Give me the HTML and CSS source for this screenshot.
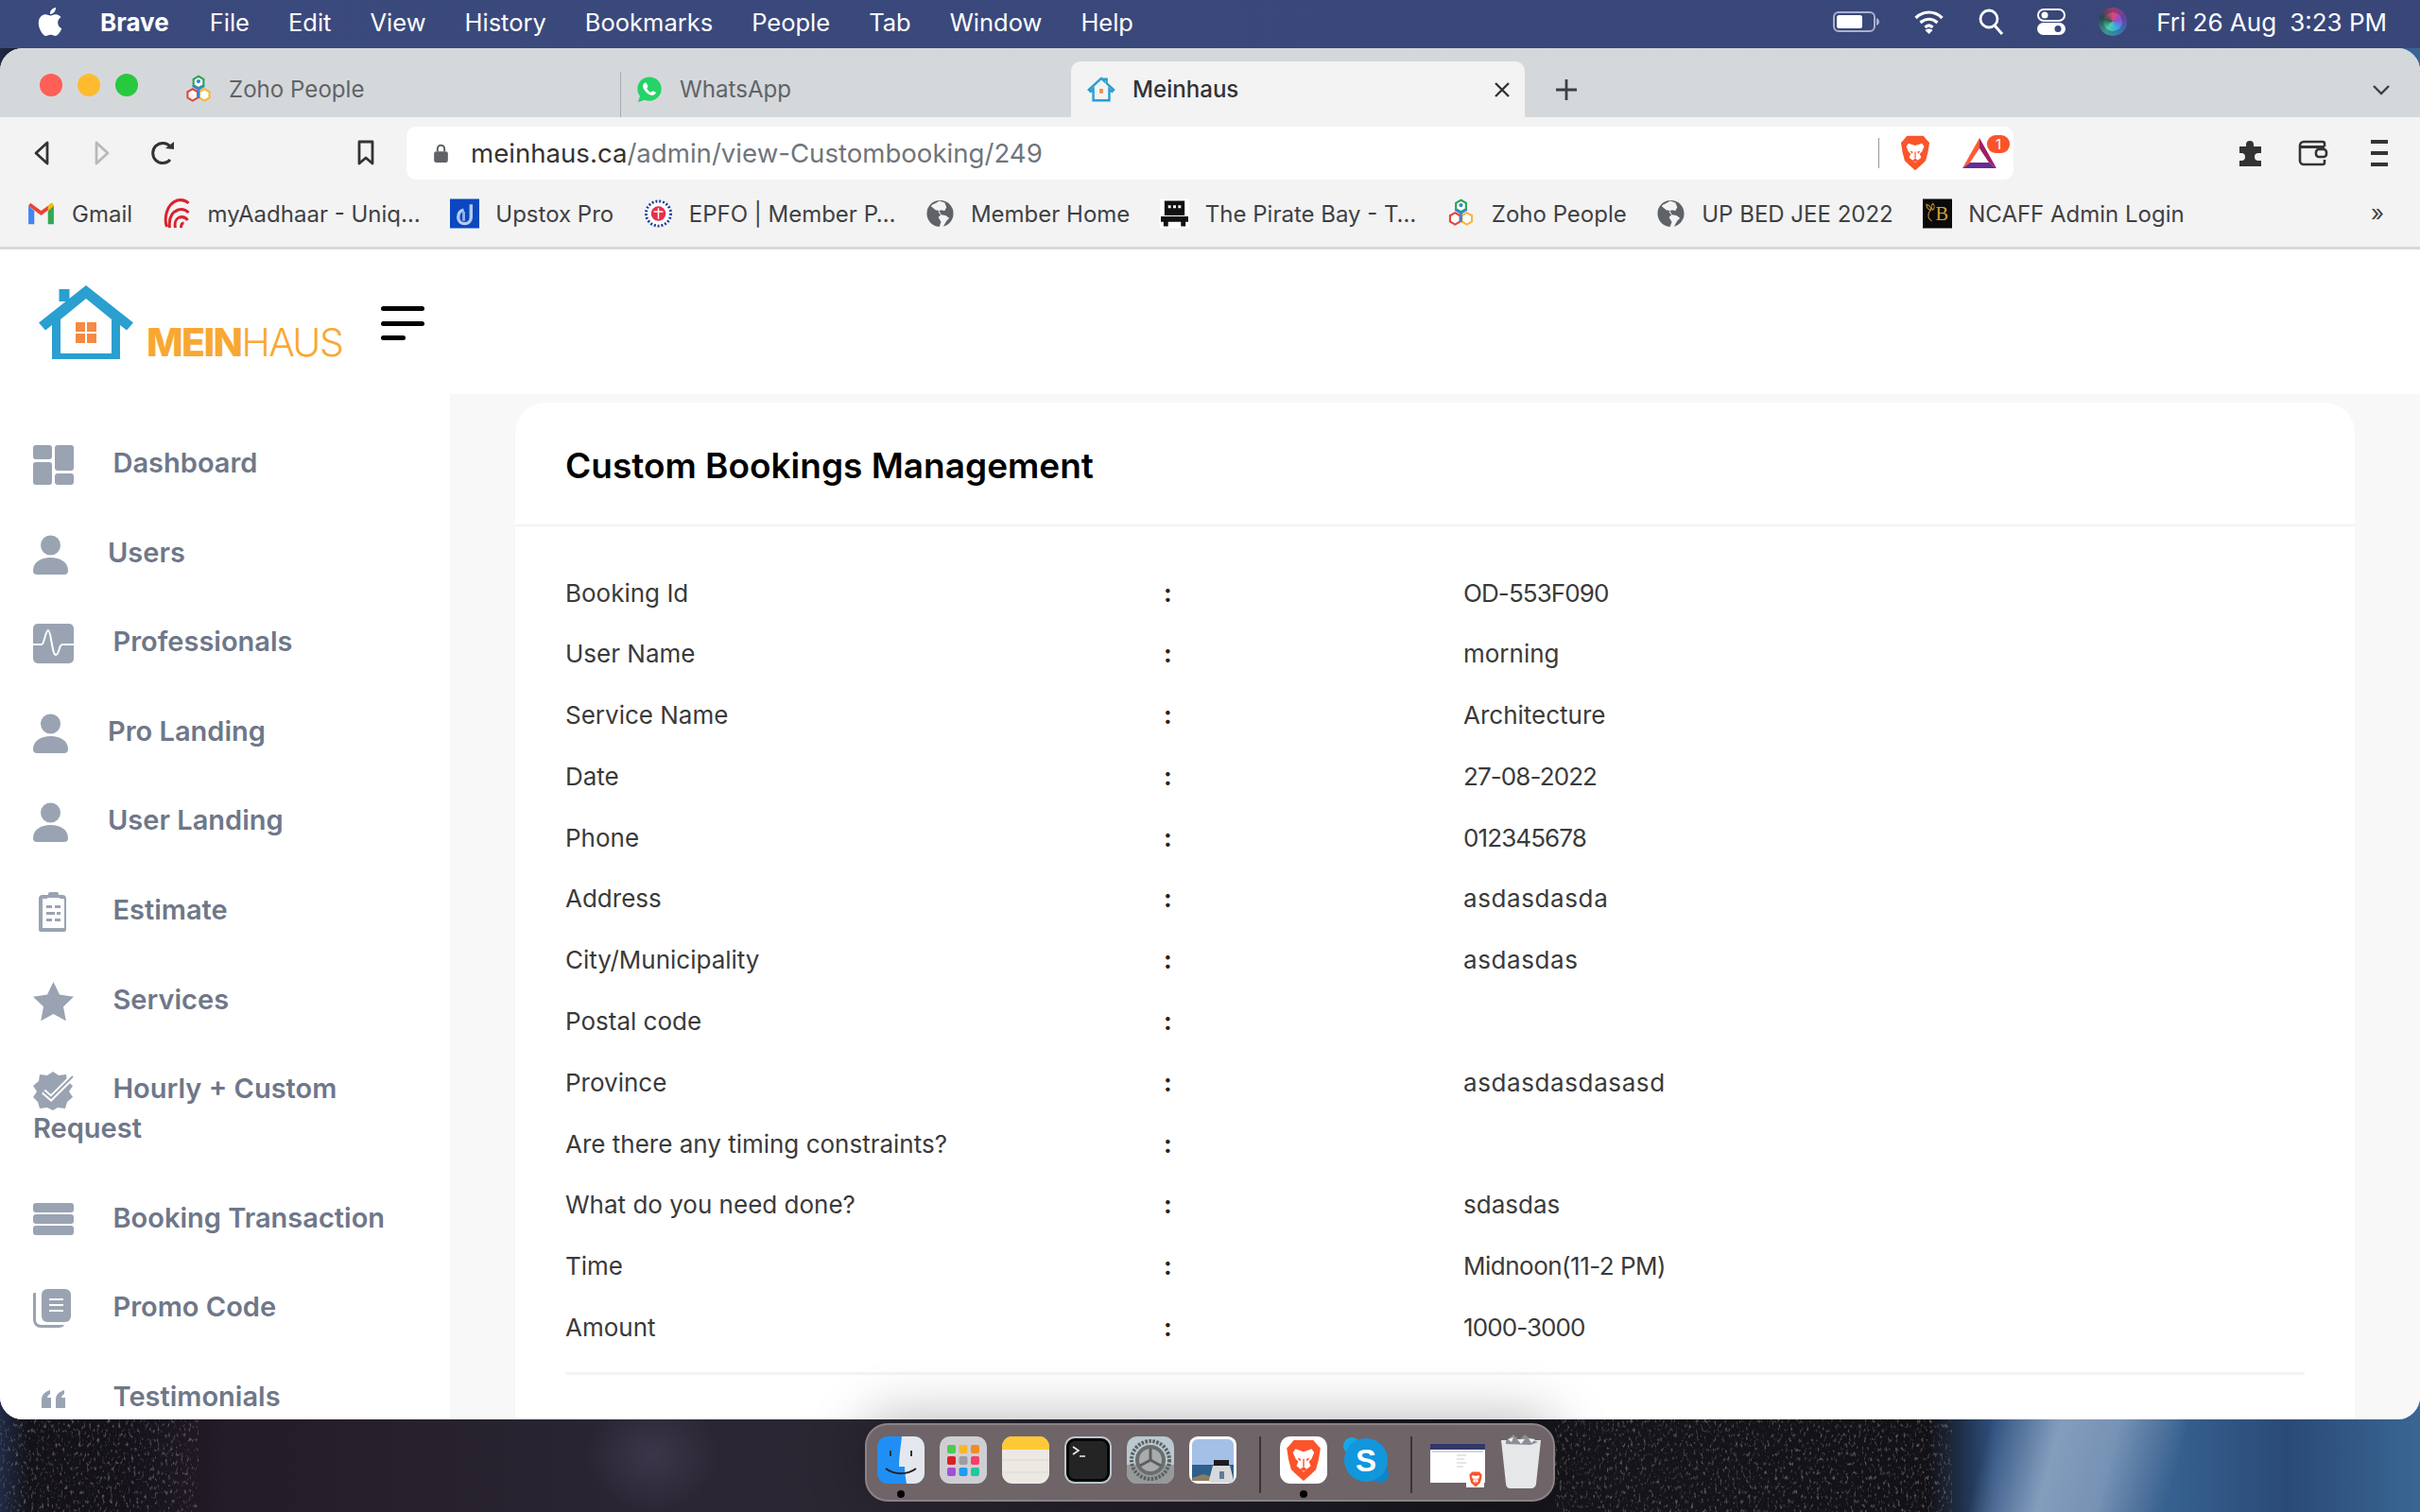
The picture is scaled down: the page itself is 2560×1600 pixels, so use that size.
FILE: index.html
```html
<!DOCTYPE html>
<html lang="en">
<head>
  <meta charset="UTF-8">
  <title>Meinhaus</title>
  <link rel="stylesheet" href="styles.css">
</head>
<body>
  <svg class="defs" xmlns="http://www.w3.org/2000/svg">
    <symbol id="i-zoho" viewBox="0 0 32 36">
      <path d="M16 2l6 3.500v7L16 16l-6-3.500v-7z" fill="#fff" stroke="#2aa35a" stroke-width="2.400"/>
      <path d="M9 17l6 3.500v7L9 31l-6-3.500v-7z" fill="#fff" stroke="#e4443f" stroke-width="2.400"/>
      <path d="M23 17l6 3.500v7L23 31l-6-3.500v-7z" fill="#fff" stroke="#f5b83d" stroke-width="2.400"/>
      <circle cx="16" cy="8" r="2.400" fill="#3d85c6"/>
      <path d="M9 13l7 4 7-4M16 17v11" fill="none" stroke="#3d85c6" stroke-width="3"/>
    </symbol>
    <symbol id="i-globe" viewBox="0 0 32 32">
      <circle cx="16" cy="16" r="14.500" fill="#5f6368"/>
      <path d="M15 2c-3 3-7 3-9 6l5 4 4 1 2 4-3 3 3 5-2 6h4l4-7 3-3-4-3-6-1-2-3 3-2 4 1 2-4-2-5z" fill="#f3f3f3"/>
    </symbol>
    <symbol id="i-user" viewBox="0 0 37 42">
      <ellipse cx="18.500" cy="11" rx="10.500" ry="10.500"/>
      <path d="M0 38c0-9 8-14 18.500-14S37 29 37 38c0 2.500-1.500 4-4 4H4c-2.500 0-4-1.500-4-4z"/>
    </symbol>
    <symbol id="i-lion" viewBox="0 0 40 48">
      <path d="M9 1h22l5 6 3 3-2 13-3 11-6 6-8 7-8-7-6-6-3-11L1 10l3-3z" fill="#fb542b"/>
      <path d="M11 11l9 3 9-3 3 4-3 7-3 3 2 5-5 4-3 3-3-3-5-4 2-5-3-3-3-7z" fill="#fff"/>
      <path d="M13 21l4 1-1 3zM27 21l-4 1 1 3zM16 34l4-3 4 3-4 2z" fill="#fb542b"/>
      <path d="M20 22v9" stroke="#fb542b" stroke-width="1.500"/>
    </symbol>
    <filter id="speckle" x="0" y="0" width="100%" height="100%">
      <feTurbulence type="fractalNoise" baseFrequency="0.36 0.2" numOctaves="3" seed="7"/>
      <feColorMatrix type="matrix" values="0 0 0 0 0.36  0 0 0 0 0.34  0 0 0 0 0.36  0 0 0 4 -2.300"/>
    </filter>
    <clipPath id="rock-shape"><path d="M70 0h130l-70 45-40 53H8l20-45z"/></clipPath>
  </svg>

  <svg class="wall-noise" viewBox="0 0 2560 98">
    <g clip-path="url(#rock-shape)"><rect filter="url(#speckle)" x="0" width="210" height="98"/></g>
    <rect filter="url(#speckle)" x="1645" width="420" height="98"/>
  </svg>

  <header class="menubar">
    <nav class="menu-left">
      <svg class="apple" viewBox="0 0 24 24"><path fill="#fff" d="M12.152 6.896c-.948 0-2.415-1.078-3.960-1.040-2.040.027-3.910 1.183-4.961 3.014-2.117 3.675-.546 9.103 1.519 12.090 1.013 1.454 2.208 3.090 3.792 3.039 1.520-.065 2.090-.987 3.935-.987 1.831 0 2.350.987 3.960.948 1.637-.026 2.676-1.480 3.676-2.948 1.156-1.688 1.636-3.325 1.662-3.415-.039-.013-3.182-1.221-3.220-4.857-.026-3.040 2.480-4.494 2.597-4.559-1.429-2.090-3.623-2.324-4.390-2.376-2-.156-3.675 1.090-4.610 1.090zM15.530 3.830c.843-1.012 1.400-2.427 1.245-3.830-1.207.052-2.662.805-3.532 1.818-.780.896-1.454 2.338-1.273 3.714 1.338.104 2.715-.688 3.559-1.701"/></svg>
      <b>Brave</b>
      <span>File</span>
      <span>Edit</span>
      <span>View</span>
      <span>History</span>
      <span>Bookmarks</span>
      <span>People</span>
      <span>Tab</span>
      <span>Window</span>
      <span>Help</span>
    </nav>
    <div class="menu-right">
      <svg class="st-battery" viewBox="0 0 50 24"><rect x="1" y="2" width="43" height="20" rx="5" fill="none" stroke="#aab2cc" stroke-width="2"/><rect x="4" y="5" width="27" height="14" rx="2.500" fill="#fff"/><path d="M46 8c2 1 3 2 3 4s-1 3-3 4z" fill="#aab2cc"/></svg>
      <svg class="st-wifi" viewBox="0 0 32 26"><path d="M2 9c8-8 20-8 28 0M7 14c5.500-5 12.500-5 18 0M12 19c2.500-2.500 5.500-2.500 8 0" fill="none" stroke="#fff" stroke-width="3.200"/><path d="M16 26l-4-4c2-2 6-2 8 0z" fill="#fff"/></svg>
      <svg class="st-search" viewBox="0 0 28 28"><circle cx="12" cy="11" r="9" fill="none" stroke="#fff" stroke-width="2.800"/><path d="M18 18l8 9" stroke="#fff" stroke-width="3"/></svg>
      <svg class="st-control" viewBox="0 0 30 28"><rect x="1" y="1" width="28" height="12" rx="6" fill="none" stroke="#fff" stroke-width="2"/><circle cx="8" cy="7" r="3.500" fill="#fff"/><rect x="0" y="15" width="30" height="13" rx="6.500" fill="#fff"/><circle cx="22" cy="21.500" r="3.500" fill="#3a4878"/></svg>
      <i class="st-siri"></i>
      <span class="clock"><span>Fri 26 Aug</span><span>3:23 PM</span></span>
    </div>
  </header>

  <div class="window">
    <div class="tabstrip">
      <div class="lights"><i class="red"></i><i class="amber"></i><i class="green"></i></div>
      <div class="tab">
        <svg class="fav" viewBox="0 0 32 36"><use href="#i-zoho"/></svg>
        <span>Zoho People</span>
      </div>
      <div class="tab tab-sep">
        <svg class="fav" viewBox="0 0 32 32"><circle cx="16" cy="15" r="13.500" fill="#25d366"/><path d="M3 30l3-9 6 6z" fill="#25d366"/><path d="M11 8c-2 1-3 3-2 6 2 4 5 7 9 8 3 1 5-1 5.500-3l-4-2-1.500 2c-2-.500-4-2.500-5-5l1.500-1.500-2-4.500z" fill="#fff"/></svg>
        <span>WhatsApp</span>
      </div>
      <div class="tab tab-active">
        <svg class="fav" viewBox="0 0 32 32"><path d="M2 16L16 3l3 2.800V4h3v4.600L30 16l-2 2-3-2.700V28H7V15.300L4 18z" fill="none" stroke="#2a9fd0" stroke-width="2.600"/><path d="M14 15h4v5h-4z" fill="#f58a42"/></svg>
        <span>Meinhaus</span>
        <svg class="tab-close" viewBox="0 0 18 18"><path d="M2 2l14 14M16 2L2 16" stroke="#333" stroke-width="2.400"/></svg>
      </div>
      <svg class="tab-new" viewBox="0 0 24 24"><path d="M12 1v22M1 12h22" stroke="#3c4043" stroke-width="2.800"/></svg>
      <svg class="tab-more" viewBox="0 0 20 12"><path d="M2 2l8 8 8-8" fill="none" stroke="#3c4043" stroke-width="2.400"/></svg>
    </div>

    <div class="toolbar">
      <svg class="tb-back" viewBox="0 0 20 28"><path d="M16 3L4 14l12 11z" fill="none" stroke="#333" stroke-width="2.800" stroke-linejoin="round"/></svg>
      <svg class="tb-fwd" viewBox="0 0 20 28"><path d="M4 3l12 11L4 25z" fill="none" stroke="#b9b9b9" stroke-width="2.800" stroke-linejoin="round"/></svg>
      <svg class="tb-reload" viewBox="0 0 28 28"><path d="M22 21a10.500 10.500 0 1 1 0-14" fill="none" stroke="#333" stroke-width="3"/><path d="M17 9l9 1V2z" fill="#333"/></svg>
      <svg class="tb-mark" viewBox="0 0 20 28"><path d="M3 2h14v23l-7-6-7 6z" fill="none" stroke="#333" stroke-width="2.800" stroke-linejoin="round"/></svg>
      <div class="omnibox">
        <svg class="lock" viewBox="0 0 18 24"><path d="M5 10V7a4 4 0 0 1 8 0v3" fill="none" stroke="#5f6368" stroke-width="2.200"/><rect x="1" y="10" width="16" height="13" rx="2.500" fill="#5f6368"/></svg>
        <span class="url"><span class="url-host">meinhaus.ca</span>/admin/view-Custombooking/249</span>
        <i class="omni-sep"></i>
        <svg class="omni-brave" viewBox="0 0 40 48"><use href="#i-lion"/></svg>
        <div class="omni-bat">
          <svg viewBox="0 0 36 32"><path d="M18 0L0 32l8-6 10-15z" fill="#ff5a36"/><path d="M18 0l18 32-8-6-10-15z" fill="#9e1f63"/><path d="M0 32l8-6h20l8 6z" fill="#662d91"/></svg>
          <em>1</em>
        </div>
      </div>
      <svg class="tb-puzzle" viewBox="0 0 28 30"><path d="M10 6a4 4 0 1 1 8 0v2h8v7h-3a4 4 0 1 0 0 8h3v6H3v-6h2a4 4 0 1 0 0-8H3V8h7z" fill="#333"/></svg>
      <svg class="tb-wallet" viewBox="0 0 32 28"><path d="M28 7V4a2 2 0 0 0-2-2H6a4 4 0 0 0-4 4v16a4 4 0 0 0 4 4h20a2 2 0 0 0 2-2v-3" fill="none" stroke="#333" stroke-width="2.600"/><path d="M3 6h25v3H3z" fill="#333"/><rect x="19" y="10" width="11" height="8" rx="3" fill="none" stroke="#333" stroke-width="2.600"/></svg>
      <div class="tb-menu"><i></i><i></i><i></i></div>
    </div>

    <div class="bookmarks">
      <div class="bm">
        <svg class="bm-ico" viewBox="0 0 30 24"><path d="M2 4v19h6V9z" fill="#4285f4"/><path d="M22 23h6V4l-6 5z" fill="#34a853"/><path d="M2 4l13 10L28 4l-2-3-11 8L4 1z" fill="#ea4335"/><path d="M22 9l6-5-2-3-4 3z" fill="#fbbc04"/></svg>
        <span>Gmail</span>
      </div>
      <div class="bm">
        <svg class="bm-ico" viewBox="0 0 30 32"><path d="M4 30C1 22 3 6 15 2c5-1 9 0 12 3M7 31c-1-8 1-16 9-19 4-1 8 0 11 3M13 31c-1-4 0-9 4-11 4-1 7 0 9 3M19 31c0-3 1-5 3-5" fill="none" stroke="#d9232e" stroke-width="3"/></svg>
        <span>myAadhaar - Uniq…</span>
      </div>
      <div class="bm">
        <svg class="bm-ico" viewBox="0 0 32 32"><rect width="32" height="32" fill="#0b48c0"/><path d="M23 6v14c0 4-3 7-7 7s-7-3-7-7 2-7 6-8" fill="none" stroke="#b5cbf2" stroke-width="3.500"/><path d="M15 14v10" stroke="#8fb0ea" stroke-width="3"/></svg>
        <span>Upstox Pro</span>
      </div>
      <div class="bm">
        <svg class="bm-ico" viewBox="0 0 32 32"><circle cx="16" cy="16" r="13.500" fill="#fff" stroke="#1f3b9b" stroke-width="3" stroke-dasharray="2 2"/><circle cx="16" cy="16" r="8" fill="#e7304a"/><path d="M11 14h10M16 10v12" stroke="#fff" stroke-width="1.500"/></svg>
        <span>EPFO | Member P…</span>
      </div>
      <div class="bm">
        <svg class="bm-ico" viewBox="0 0 32 32"><use href="#i-globe"/></svg>
        <span>Member Home</span>
      </div>
      <div class="bm">
        <svg class="bm-ico" viewBox="0 0 32 32"><rect width="32" height="32" fill="#fff"/><path d="M5 2h22v16H5zM1 19h30v6H1zM4 25h5v5H4zM23 25h5v5h-5z" fill="#111"/><path d="M9 7h3v3H9zM14.500 7h3v3h-3zM20 7h3v3h-3z" fill="#fff"/></svg>
        <span>The Pirate Bay - T…</span>
      </div>
      <div class="bm">
        <svg class="bm-ico" viewBox="0 0 32 36"><use href="#i-zoho"/></svg>
        <span>Zoho People</span>
      </div>
      <div class="bm">
        <svg class="bm-ico" viewBox="0 0 32 32"><use href="#i-globe"/></svg>
        <span>UP BED JEE 2022</span>
      </div>
      <div class="bm">
        <svg class="bm-ico" viewBox="0 0 32 32"><rect width="32" height="32" fill="#0a0a0a"/><text x="14" y="23" font-family="Liberation Serif" font-size="21" fill="#d4a23a">B</text><path d="M4 6c3 1 5 3 5 6-3 0-5-3-5-6zM11 5c2 2 2 5 0 7-2-2-2-5 0-7zM9 12c-4 3-4 10 1 12" fill="none" stroke="#b98a32" stroke-width="1.200"/></svg>
        <span>NCAFF Admin Login</span>
      </div>
      <span class="bm-more">»</span>
    </div>

    <div class="page">
      <div class="topbar">
        <div class="logo">
          <svg class="logo-house" viewBox="0 0 100 78"><path d="M0 39.500L50 0l50 39.500-7 8L86 42v36H14V42l-7 5.500z" fill="#2a9fd0"/><path d="M21.500 4h11v13h-11z" fill="#2a9fd0"/><path d="M23 72V36L50 14l27 22v36z" fill="#fff"/><path d="M39 39h10v10H39zM51 39h10v10H51zM39 51h10v10H39zM51 51h10v10H51z" fill="#f58a42"/></svg>
          <span class="logo-text"><b>MEIN</b>HAUS</span>
        </div>
        <div class="burger"><i></i><i></i><i class="short"></i></div>
      </div>

      <div class="page-body">
        <aside class="sidebar">
          <a class="nav-item">
            <svg class="nav-ico" viewBox="0 0 43 42"><rect width="20" height="15" rx="3"/><rect y="18" width="20" height="24" rx="3"/><rect x="23" width="20" height="27" rx="3"/><rect x="23" y="30" width="20" height="12" rx="3"/></svg>Dashboard
          </a>
          <a class="nav-item">
            <svg class="nav-ico nav-ico-user"><use href="#i-user"/></svg>Users
          </a>
          <a class="nav-item">
            <svg class="nav-ico" viewBox="0 0 43 42"><rect width="43" height="42" rx="5"/><path d="M0 22h9c3 0 4-15 7-15s4 26 8 26 3-11 7-11h12" fill="none" stroke="#fff" stroke-width="2"/></svg>Professionals
          </a>
          <a class="nav-item">
            <svg class="nav-ico nav-ico-user"><use href="#i-user"/></svg>Pro Landing
          </a>
          <a class="nav-item">
            <svg class="nav-ico nav-ico-user"><use href="#i-user"/></svg>User Landing
          </a>
          <a class="nav-item">
            <svg class="nav-ico" viewBox="0 0 43 42"><path d="M12 3h4V2a2 2 0 0 1 2-2h7a2 2 0 0 1 2 2v1h4a4 4 0 0 1 4 4v33a2 2 0 0 1-2 2H8a2 2 0 0 1-2-2V7a4 4 0 0 1 4-4z"/><path d="M10 7h23v31H10z" fill="#fff"/><path d="M15 6h13v2H15z" fill="#fff"/><path d="M14 14h6v3h-6zM23 14h6v3h-6zM14 21h9v3h-9zM25 21h4v3h-4zM14 28h6v3h-6zM23 28h6v3h-6z"/></svg>Estimate
          </a>
          <a class="nav-item">
            <svg class="nav-ico" viewBox="0 0 43 42"><path d="M21.500 0l6.500 13.500 15 2.200-11 10.500 2.800 15L21.500 34 8.200 41.200 11 26.200 0 15.700l15-2.200z" stroke-linejoin="round"/></svg>Services
          </a>
          <a class="nav-item">
            <svg class="nav-ico" viewBox="0 0 43 42"><path d="M21 1l6 4 8-1 1 7 6 5-4 6 4 6-6 5-2 7-8-1-5 3-6-3-8 1-2-7-5-5 4-6-4-6 6-5 1-7 8 1z"/><path d="M11 22l8 7L42 6" fill="none" stroke="#fff" stroke-width="6"/><path d="M11 22l8 7L42 6" fill="none" stroke="#9aa3b2" stroke-width="2"/></svg>Hourly + Custom Request
          </a>
          <a class="nav-item">
            <svg class="nav-ico" viewBox="0 0 43 42"><rect width="43" height="10" y="3" rx="3"/><rect width="43" height="10" y="15" rx="3"/><rect width="43" height="10" y="27" rx="3"/></svg>Booking Transaction
          </a>
          <a class="nav-item">
            <svg class="nav-ico" viewBox="0 0 43 42"><path d="M5 5v28a8 8 0 0 0 8 8h19c3 0 5-1 6-3H13a5 5 0 0 1-5-5V4C6 4 5 4 5 5z" transform="translate(-5)"/><rect x="9" width="31" height="35" rx="6"/><path d="M17 11h15M17 17h15M17 23h15" stroke="#fff" stroke-width="2"/></svg>Promo Code
          </a>
          <a class="nav-item">
            <svg class="nav-ico" viewBox="0 0 43 42"><path d="M9 31v-9c0-5 3-8 9-10v4c-2 1-3 3-3 4h4v11zM24 31v-9c0-5 3-8 9-10v4c-2 1-3 3-3 4h4v11z"/></svg>Testimonials
          </a>
        </aside>

        <main class="content">
          <section class="card">
            <h1 class="card-title">Custom Bookings Management</h1>
            <div class="details">
              <div class="row"><span>Booking Id</span><b>:</b><span class="num">OD-553F090</span></div>
              <div class="row"><span>User Name</span><b>:</b><span>morning</span></div>
              <div class="row"><span>Service Name</span><b>:</b><span>Architecture</span></div>
              <div class="row"><span>Date</span><b>:</b><span class="num">27-08-2022</span></div>
              <div class="row"><span>Phone</span><b>:</b><span class="num">012345678</span></div>
              <div class="row"><span>Address</span><b>:</b><span class="loose">asdasdasda</span></div>
              <div class="row"><span>City/Municipality</span><b>:</b><span class="loose">asdasdas</span></div>
              <div class="row"><span>Postal code</span><b>:</b><span></span></div>
              <div class="row"><span>Province</span><b>:</b><span class="loose">asdasdasdasasd</span></div>
              <div class="row"><span>Are there any timing constraints?</span><b>:</b><span></span></div>
              <div class="row"><span>What do you need done?</span><b>:</b><span>sdasdas</span></div>
              <div class="row"><span>Time</span><b>:</b><span class="num-mix">Midnoon(11-2 PM)</span></div>
              <div class="row"><span>Amount</span><b>:</b><span class="num">1000-3000</span></div>
              <hr class="details-end">
            </div>
          </section>
        </main>
      </div>
    </div>
  </div>

  <div class="dock">
    <div class="dock-app running">
      <svg viewBox="0 0 50 50"><rect width="50" height="50" rx="11" fill="#1f8ff5"/><path d="M26 0h13a11 11 0 0 1 11 11v28a11 11 0 0 1-11 11H31c-1-6-2-12-2-18h-6c0-11 2-22 3-32z" fill="#e4e8ee"/><path d="M14 15v6M36 15v6" stroke="#333" stroke-width="2"/><path d="M9 34c9 7 23 7 32 0" fill="none" stroke="#222" stroke-width="2"/></svg>
    </div>
    <div class="dock-app">
      <svg viewBox="0 0 50 50"><rect width="50" height="50" rx="11" fill="#cfcfd3"/><rect x="8" y="9" width="9" height="9" rx="2" fill="#4ccb4f"/><rect x="20.500" y="9" width="9" height="9" rx="2" fill="#f4b828"/><rect x="33" y="9" width="9" height="9" rx="2" fill="#f28c1e"/><rect x="8" y="21" width="9" height="9" rx="2" fill="#d92027"/><rect x="20.500" y="21" width="9" height="9" rx="2" fill="#9a9ea3"/><rect x="33" y="21" width="9" height="9" rx="2" fill="#f4406a"/><rect x="8" y="33" width="9" height="9" rx="2" fill="#a24fd8"/><rect x="20.500" y="33" width="9" height="9" rx="2" fill="#1e9df2"/><rect x="33" y="33" width="9" height="9" rx="2" fill="#22c6a0"/></svg>
    </div>
    <div class="dock-app">
      <svg viewBox="0 0 50 50"><rect width="50" height="50" rx="11" fill="#ece9e3"/><path d="M0 14V11A11 11 0 0 1 11 0h28a11 11 0 0 1 11 11v3z" fill="#fdc935"/><path d="M0 25h50M0 38h50" stroke="#dcd9d2" stroke-width="1"/></svg>
    </div>
    <div class="dock-app">
      <svg viewBox="0 0 50 50"><rect width="50" height="50" rx="11" fill="#b9c6cc"/><rect x="2" y="2" width="46" height="46" rx="9" fill="#050505"/><rect x="5" y="5" width="40" height="40" rx="6" fill="#242424"/><path d="M9 11l6 4-6 4M16 21h6" fill="none" stroke="#eee" stroke-width="1.600"/></svg>
    </div>
    <div class="dock-app">
      <svg viewBox="0 0 50 50"><rect width="50" height="50" rx="11" fill="#b9c9cf"/><path d="M0 30h50v9a11 11 0 0 1-11 11H11A11 11 0 0 1 0 39z" fill="#98999a"/><circle cx="25" cy="25" r="20" fill="none" stroke="#5c5f61" stroke-width="4" stroke-dasharray="2.500 1.500"/><circle cx="25" cy="25" r="16" fill="#6a6d6f"/><circle cx="25" cy="25" r="12" fill="#a9abad"/><path d="M25 25V13M25 25l11 6M25 25l-11 6" stroke="#5c5f61" stroke-width="3"/></svg>
    </div>
    <div class="dock-app">
      <svg viewBox="0 0 50 50"><rect width="50" height="50" rx="9" fill="#fbfbfb"/><rect x="3" y="3" width="44" height="44" rx="6" fill="#a4c0e6"/><path d="M3 30h44v17H3z" fill="#2f5f8c"/><path d="M3 44l12-4 10 3v4H3z" fill="#8a7d64"/><path d="M26 25h16v6H26z" fill="#1c1c1e"/><path d="M25 31h18l4 15a3 3 0 0 1-3 3H24a3 3 0 0 1-3-3z" fill="#d7d9db"/><path d="M32 37h5v8h-5z" fill="#5e7d98"/></svg>
    </div>
    <i class="dock-sep"></i>
    <div class="dock-app running dock-brave">
      <svg viewBox="0 0 50 50"><rect width="50" height="50" rx="11" fill="#fff"/><svg x="6" y="3" width="38" height="45" viewBox="0 0 40 48"><use href="#i-lion"/></svg></svg>
    </div>
    <div class="dock-app dock-skype">
      <svg viewBox="0 0 50 50"><circle cx="10" cy="10" r="9" fill="#16a8e6"/><circle cx="40" cy="40" r="9" fill="#0e86c9"/><circle cx="25" cy="25" r="23" fill="#1296dc"/><text x="25" y="37" text-anchor="middle" font-family="Liberation Sans" font-weight="700" font-size="33" fill="#fff">S</text></svg>
    </div>
    <i class="dock-sep"></i>
    <div class="dock-app dock-minimized">
      <svg viewBox="0 0 58 46"><rect width="58" height="41" y="0" fill="#fff"/><rect width="58" height="6" fill="#33386b"/><rect x="2" y="7" width="54" height="2" fill="#d4d8dc"/><path d="M28 12h10M28 16h8M28 20h10M28 24h7" stroke="#c8ccd0" stroke-width="1"/><rect x="38" y="29" width="19" height="17" fill="#fff"/><svg x="41" y="29" width="14" height="17" viewBox="0 0 40 48"><use href="#i-lion"/></svg></svg>
    </div>
    <div class="dock-app dock-trash">
      <svg viewBox="0 0 44 58"><path d="M1 7h42l-5 46c0 3-3 5-5 5H11c-3 0-5-2-5-5z" fill="#e6e7e8"/><path d="M6 8l8-7 6 6 6-6 6 5 8 3-8 3-26-1z" fill="#8b8f93"/><path d="M18 6l4 5 4-5zM8 6l4 3 2-5zM30 5l3 5 4-4z" fill="#eef"/></svg>
    </div>
  </div>
</body>
</html>
```

FILE: styles.css
```css
* {
  box-sizing: border-box;
}

html,
body {
  margin: 0;
  height: 100%;
}

body {
  width: 2560px;
  height: 1600px;
  overflow: hidden;
  position: relative;
  font-family: "Inter", "Liberation Sans", sans-serif;
  background:
    linear-gradient(105deg, rgba(140, 165, 195, 0) 26%, rgba(140, 165, 195, 0.9) 40%, rgba(140, 165, 195, 0.75) 52%, rgba(140, 165, 195, 0) 66%) 1970px 1502px / 500px 98px no-repeat,
    radial-gradient(ellipse 70px 60px at 690px 1540px, rgba(70, 66, 88, 0.6), rgba(70, 66, 88, 0)),
    linear-gradient(to right, #1f2a45 0, #141219 30px, #15121a 140px, #241c28 240px, #2a2634 700px, #2b2632 915px, #16151b 1645px, #121216 2040px, #2e4f7e 2110px, #36608f 2300px, #2a4a76 2420px, #3a6694 2560px);
}

.defs {
  display: none;
}

.wall-noise {
  position: absolute;
  left: 0;
  top: 1502px;
  width: 2560px;
  height: 98px;
}

/* mac menu bar */
.menubar {
  height: 51px;
  position: relative;
  background: linear-gradient(to right, #3b4a7d, #384678);
  color: #fff;
  display: flex;
  justify-content: space-between;
  align-items: center;
  padding: 0 35px 5px 38px;
  font-size: 25.500px;
}

.menu-left {
  display: flex;
  align-items: center;
  gap: 41px;
}

.menu-left b {
  font-size: 26px;
  font-weight: 700;
  margin-left: -3px;
  margin-right: 2px;
}

.apple {
  width: 30px;
  height: 34px;
}

.menu-right {
  display: flex;
  align-items: center;
  gap: 35px;
  font-size: 26px;
}

.st-battery {
  width: 50px;
  height: 24px;
}

.st-wifi {
  width: 33px;
  height: 26px;
}

.st-search {
  width: 28px;
  height: 28px;
}

.st-control {
  width: 30px;
  height: 28px;
}

.st-siri {
  width: 30px;
  height: 30px;
  border-radius: 50%;
  background: conic-gradient(#e0457b, #8a4fd0, #3aa7e0, #4fd0b0, #2c5a50, #e0457b);
  box-shadow: inset 0 0 0 5px rgba(30, 40, 80, 0.35);
}

.clock {
  display: flex;
  gap: 14px;
  margin-left: -4px;
}

/* browser window */
.window {
  height: 1451px;
  position: relative;
  background: #fff;
  border-radius: 24px;
  overflow: hidden;
  display: flex;
  flex-direction: column;
}

.tabstrip {
  height: 73px;
  flex: none;
  background: #d5d8db;
  display: flex;
  align-items: flex-end;
  position: relative;
  padding-left: 180px;
}

.lights {
  position: absolute;
  left: 42px;
  top: 27px;
  display: flex;
  gap: 16px;
}

.lights i {
  width: 24px;
  height: 24px;
  border-radius: 50%;
}

.lights .red {
  background: #fe5f57;
}

.lights .amber {
  background: #febb2e;
}

.lights .green {
  background: #28c840;
}

.tab {
  width: 476px;
  height: 59px;
  display: flex;
  align-items: center;
  gap: 17px;
  padding: 0 0 0 15px;
  color: #606468;
  font-size: 24.100px;
  position: relative;
}

.tab-sep {
  width: 477px;
  padding-left: 16px;
}

.tab-sep::before {
  content: "";
  position: absolute;
  left: 0;
  top: 11px;
  bottom: 0;
  width: 1px;
  background: #a9acaf;
}

.tab-active {
  width: 480px;
  background: #f3f3f3;
  color: #333;
  font-weight: 500;
  border-radius: 10px 10px 0 0;
  padding-left: 17px;
  gap: 18px;
}

.fav {
  width: 30px;
  height: 32px;
  flex: none;
}

.tab-close {
  width: 18px;
  height: 18px;
  position: absolute;
  right: 15px;
  top: 21px;
}

.tab-new {
  width: 24px;
  height: 24px;
  margin: 0 0 17px 32px;
}

.tab-more {
  width: 20px;
  height: 12px;
  position: absolute;
  right: 31px;
  top: 38px;
}

.toolbar {
  height: 76px;
  flex: none;
  background: #f3f3f3;
  display: flex;
  align-items: center;
  padding: 0 33px 0 34px;
}

.tb-back,
.tb-fwd,
.tb-mark {
  width: 20px;
  height: 28px;
  flex: none;
}

.tb-fwd {
  margin-left: 44px;
}

.tb-reload {
  width: 28px;
  height: 28px;
  margin-left: 40px;
  flex: none;
}

.tb-mark {
  margin-left: 191px;
}

.omnibox {
  width: 1700px;
  height: 56px;
  margin-left: 33px;
  background: #fff;
  border-radius: 10px;
  display: flex;
  align-items: center;
  padding-left: 28px;
  position: relative;
  flex: none;
}

.lock {
  width: 17px;
  height: 22px;
  flex: none;
}

.url {
  margin-left: 23px;
  font-size: 27.600px;
  color: #70757a;
  white-space: nowrap;
}

.url-host {
  color: #333;
}

.omni-sep {
  width: 1px;
  height: 32px;
  background: #999;
  position: absolute;
  left: 1557px;
  top: 12px;
}

.omni-brave {
  width: 32px;
  height: 38px;
  position: absolute;
  left: 1580px;
  top: 9px;
}

.omni-bat {
  position: absolute;
  left: 1646px;
  top: 12px;
  width: 36px;
  height: 32px;
}

.omni-bat svg {
  width: 36px;
  height: 32px;
  display: block;
}

.omni-bat em {
  position: absolute;
  left: 26px;
  top: -3px;
  width: 24px;
  height: 19px;
  border-radius: 9px;
  background: #fb542b;
  color: #fff;
  font-style: normal;
  font-size: 15px;
  text-align: center;
  line-height: 19px;
}

.tb-puzzle {
  width: 30px;
  height: 30px;
  margin-left: 235px;
  flex: none;
}

.tb-wallet {
  width: 32px;
  height: 28px;
  margin-left: 36px;
  flex: none;
}

.tb-menu {
  margin-left: 45px;
  width: 18px;
  flex: none;
  display: flex;
  flex-direction: column;
  gap: 8px;
}

.tb-menu i {
  height: 4px;
  background: #333;
}

.bookmarks {
  height: 64px;
  flex: none;
  background: #f3f3f3;
  border-bottom: 3px solid #d5d9dc;
  display: flex;
  align-items: center;
  padding: 0 0 9px 28px;
  gap: 31.500px;
  position: relative;
  font-size: 24px;
  color: #3f4144;
}

.bm {
  display: flex;
  align-items: center;
  gap: 17px;
  white-space: nowrap;
}

.bm-ico {
  width: 31px;
  height: 32px;
  flex: none;
}

.bm-more {
  position: absolute;
  right: 38px;
  top: 11px;
}

/* the page itself */
.page {
  flex: 1;
  min-height: 0;
  display: flex;
  flex-direction: column;
}

.topbar {
  height: 153px;
  flex: none;
  display: flex;
  align-items: flex-start;
  padding: 38px 0 0 41px;
}

.logo {
  display: flex;
  align-items: flex-end;
  gap: 14px;
}

.logo-house {
  width: 100px;
  height: 78px;
}

.logo-text {
  font-size: 41px;
  line-height: 30px;
  height: 30px;
  color: #f8a832;
  font-weight: 300;
  letter-spacing: -1.600px;
  margin-bottom: 3px;
}

.logo-text b {
  font-weight: 800;
}

.burger {
  margin: 22px 0 0 41px;
  width: 46px;
  display: flex;
  flex-direction: column;
  gap: 10.500px;
}

.burger i {
  height: 5px;
  border-radius: 3px;
  background: #000;
}

.burger .short {
  width: 26px;
}

.page-body {
  flex: 1;
  min-height: 0;
  display: flex;
  overflow: hidden;
}

.sidebar {
  width: 476px;
  flex: none;
  padding: 52px 20px 0 35px;
  background: #fff;
}

.nav-item {
  display: block;
  margin-bottom: 52.600px;
  font-size: 29px;
  line-height: 42px;
  font-weight: 600;
  color: #6f7789;
}

.nav-ico {
  width: 43px;
  height: 42px;
  margin: -5px 41.500px -5px 0;
  vertical-align: middle;
  fill: #9aa3b2;
}

.nav-ico-user {
  width: 37px;
  height: 42px;
  margin-right: 42px;
}

.content {
  flex: 1;
  min-width: 0;
  background: #f8f8f8;
  padding: 9px 69px 0 69px;
}

.card {
  background: #fff;
  border-radius: 32px 32px 0 0;
  height: 1200px;
}

.card-title {
  margin: 0;
  height: 131px;
  padding: 4px 53px 0;
  border-bottom: 2px solid #f3f3f3;
  display: flex;
  align-items: center;
  font-size: 37px;
  font-weight: 600;
  color: #000;
}

.details {
  padding: 53.500px 53px 0 53px;
}

.row {
  display: grid;
  grid-template-columns: 633px 317px 1fr;
  height: 64.800px;
  align-items: start;
  font-size: 26px;
  line-height: 33px;
  color: #3a3a3a;
}

.row b {
  font-weight: 700;
  color: #222;
}

.num {
  letter-spacing: -0.900px;
}

.num-mix {
  letter-spacing: -0.500px;
}

.loose {
  letter-spacing: 0.600px;
}

.details-end {
  border: 0;
  border-top: 3px solid #f4f4f4;
  margin: -1px 0 0;
}

/* dock sits over the window */
.dock {
  position: absolute;
  left: 915px;
  top: 1506px;
  width: 730px;
  height: 83px;
  background: #6f6468;
  border: 2px solid #8b8286;
  border-radius: 24px;
  box-shadow: 0 -6px 60px rgba(0, 0, 0, 0.28);
  display: flex;
  align-items: flex-start;
  gap: 16px;
  padding: 12px 0 0 11px;
}

.dock-app {
  width: 50px;
  height: 50px;
  position: relative;
  flex: none;
}

.dock-app > svg {
  display: block;
  width: 50px;
  height: 50px;
}

.dock-app.running::after {
  content: "";
  position: absolute;
  left: 21px;
  top: 57px;
  width: 8px;
  height: 8px;
  border-radius: 50%;
  background: #000;
}

.dock-sep {
  width: 2px;
  height: 60px;
  background: #3a3436;
  margin: 0 1px 0 8px;
  flex: none;
}

.dock-brave {
  margin-left: 3px;
}

.dock-skype {
  margin-left: 0;
  margin-right: -2px;
}

.dock-minimized {
  width: 58px;
  margin: 8px 0 0 2px;
}

.dock-minimized > svg {
  width: 58px;
  height: 46px;
}

.dock-trash {
  width: 44px;
  margin: -3px 0 0 0;
}

.dock-trash > svg {
  width: 44px;
  height: 58px;
}
```
